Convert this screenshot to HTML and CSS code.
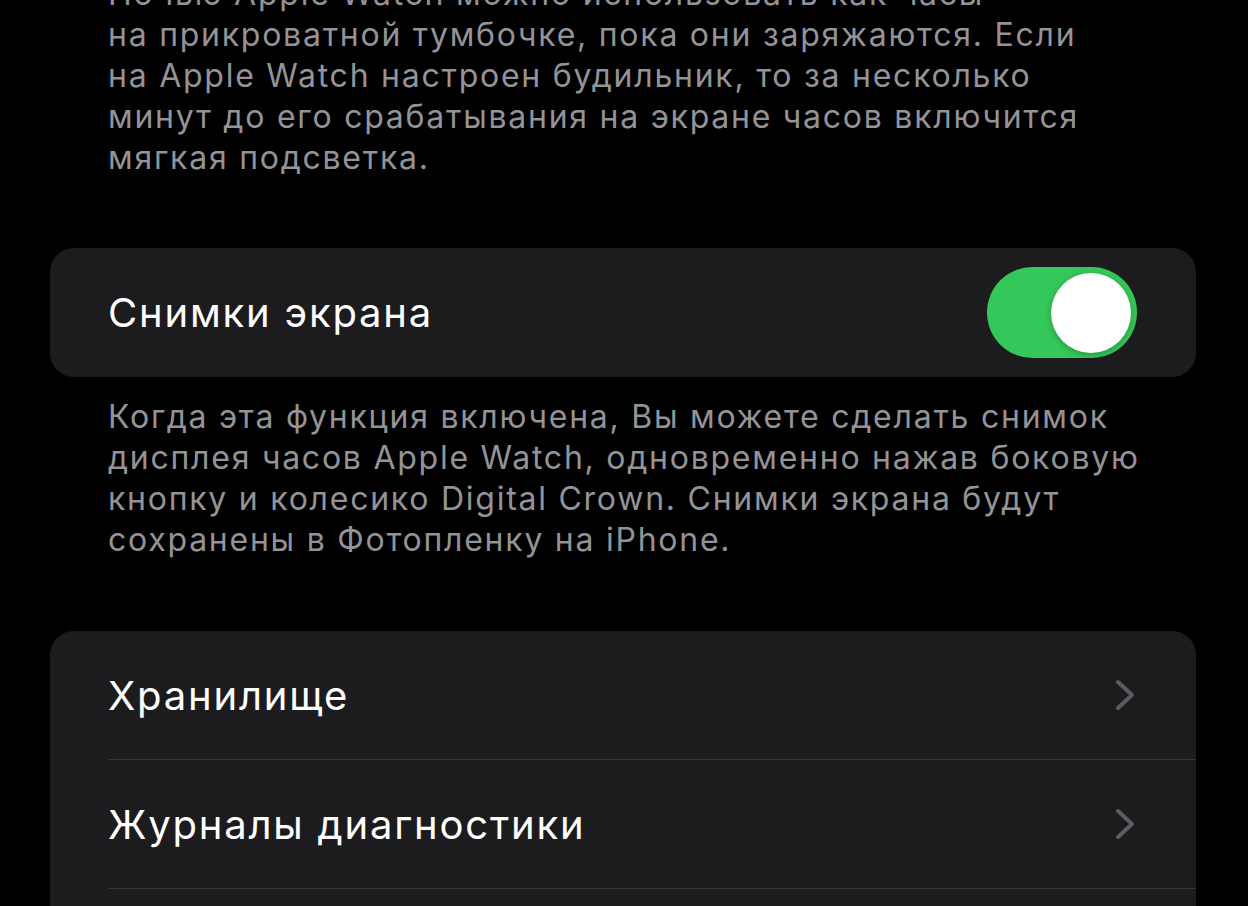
FILE: index.html
```html
<!DOCTYPE html>
<html>
<head>
    <title>Основные</title>
    <link rel="stylesheet" href="styles.css">
</head>
<body>
    <div class="settings">
        <p class="note note-top">
            Ночью Apple Watch можно использовать как часы<br>
            на прикроватной тумбочке, пока они заряжаются. Если<br>
            на Apple Watch настроен будильник, то за несколько<br>
            минут до его срабатывания на экране часов включится<br>
            мягкая подсветка.
        </p>

        <div class="group">
            <div class="row">
                <span class="row-label">Снимки экрана</span>
                <span class="switch on"><span class="knob"></span></span>
            </div>
        </div>
        <p class="note">
            Когда эта функция включена, Вы можете сделать снимок<br>
            дисплея часов Apple Watch, одновременно нажав боковую<br>
            кнопку и колесико Digital Crown. Снимки экрана будут<br>
            сохранены в Фотопленку на iPhone.
        </p>

        <div class="group">
            <div class="row link">
                <span class="row-label">Хранилище</span>
                <svg class="chevron" viewBox="0 0 20 32"><path d="M3 3 L17 16 L3 29"/></svg>
            </div>
            <div class="row link">
                <span class="row-label">Журналы диагностики</span>
                <svg class="chevron" viewBox="0 0 20 32"><path d="M3 3 L17 16 L3 29"/></svg>
            </div>
            <div class="row-rest"></div>
        </div>
    </div>
</body>
</html>
```

FILE: styles.css
```css
body {
    margin: 0;
    background-color: #000;
    color: #fff;
    font-family: Inter, "Noto Sans", sans-serif;
    overflow: hidden;
}
.settings {
    padding: 0 52px 0 50px;
}
.note {
    margin: 0;
    padding: 19px 0 71px 58px;
    font-size: 32px;
    line-height: 41px;
    color: #939398;
    letter-spacing: 1.75px;
    white-space: nowrap;
}
.note-top {
    margin-top: -27px;
    padding-top: 0;
    padding-bottom: 70px;
}
.group {
    background-color: #1c1c1e;
    border-radius: 24px;
    overflow: hidden;
}
.row {
    display: flex;
    align-items: center;
    justify-content: space-between;
    height: 129px;
    margin-left: 58px;
    padding-right: 59px;
    box-sizing: border-box;
}
.row.link {
    height: 129px;
    border-bottom: 1px solid #38383a;
    padding-right: 61px;
}
.row-rest {
    height: 40px;
}
.row-label {
    font-size: 40px;
    letter-spacing: 1.8px;
}
.switch {
    width: 150px;
    height: 91px;
    border-radius: 46px;
    background-color: #34c759;
    display: flex;
    align-items: center;
    padding: 0 6px;
    box-sizing: border-box;
}
.switch.on {
    justify-content: flex-end;
}
.knob {
    width: 80px;
    height: 80px;
    border-radius: 50%;
    background-color: #fff;
    box-shadow: 0 2px 6px rgba(0, 0, 0, 0.25);
}
.chevron {
    width: 20px;
    height: 32px;
    fill: none;
    stroke: #5c5c60;
    stroke-width: 4;
    stroke-linecap: round;
    stroke-linejoin: round;
}
```
